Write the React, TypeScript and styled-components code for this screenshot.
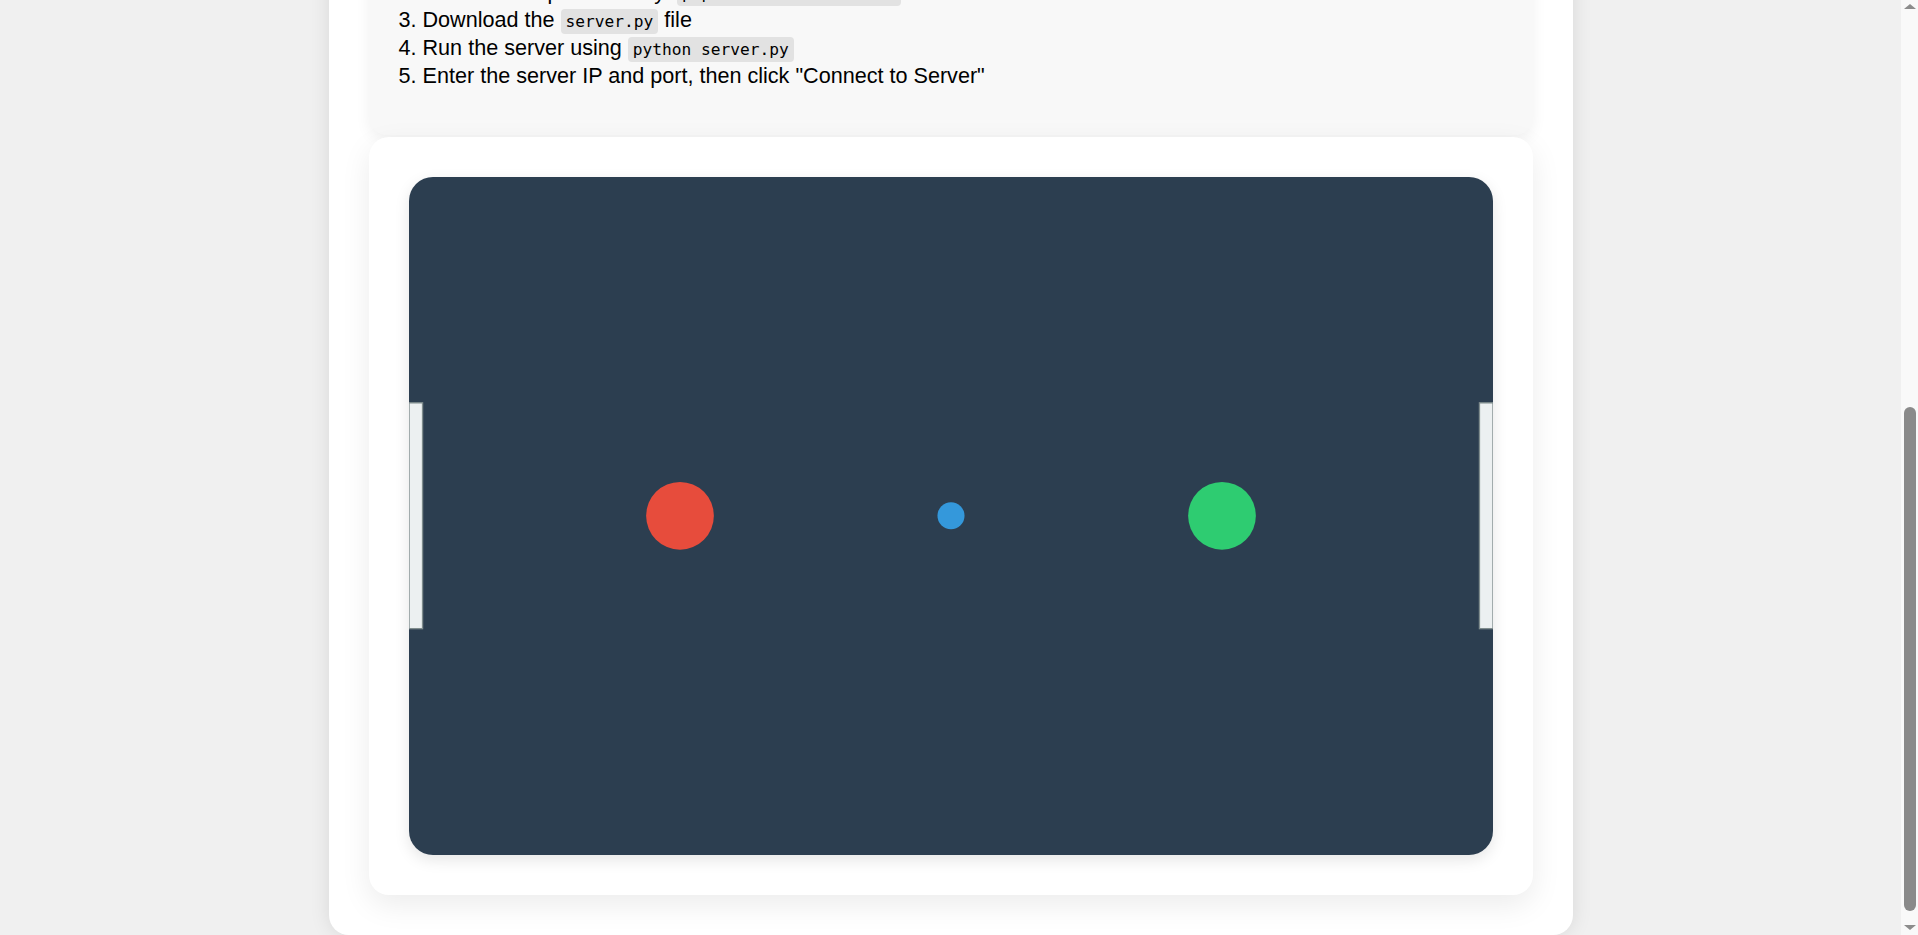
import React, { useLayoutEffect, useEffect } from "react";
import styled, { createGlobalStyle } from "styled-components";

const GlobalStyle = createGlobalStyle`
  html, body {
    margin: 0;
    padding: 0;
    background: #f0f0f0;
    font-family: "Liberation Sans", Arial, sans-serif;
    color: #000;
    scroll-behavior: auto;
  }
  * { box-sizing: border-box; }
`;

const Page = styled.div`
  padding-top: 20px;
  padding-right: 17px;
`;

const Container = styled.main`
  width: 1244px;
  margin: 0 auto;
  padding: 40px;
  background: #ffffff;
  border-radius: 20px;
  box-shadow: 0 0 20px rgba(0, 0, 0, 0.1);
  display: flex;
  flex-direction: column;
`;

const Title = styled.h1`
  margin: 0 0 24px;
  text-align: center;
  font-size: 44px;
  color: #2c3e50;
`;

const ScoreRow = styled.div`
  display: flex;
  justify-content: center;
  gap: 80px;
  margin-bottom: 24px;
`;

const Score = styled.div<{ $color: string }>`
  font-size: 28px;
  font-weight: bold;
  color: ${(p) => p.$color};
`;

const Section = styled.section<{ $gap?: number }>`
  background: #f8f8f8;
  border-radius: 18px;
  box-shadow: 0 5px 15px rgba(0, 0, 0, 0.06);
  padding: 24px 30px;
  margin-bottom: ${(p) => (p.$gap ?? 24)}px;
`;

const ControlRow = styled.div`
  display: flex;
  align-items: center;
  gap: 16px;
  font-size: 21.6px;
`;

const Input = styled.input`
  font: inherit;
  font-size: 20px;
  padding: 8px 12px;
  border: 1px solid #ccc;
  border-radius: 8px;
  width: 220px;
`;

const Button = styled.button`
  font: inherit;
  font-size: 20px;
  padding: 10px 20px;
  border: none;
  border-radius: 8px;
  background: #3498db;
  color: #fff;
`;

const Status = styled.div`
  margin-top: 14px;
  font-size: 20px;
  color: #e74c3c;
`;

const InstructionTitle = styled.h3`
  margin: 0 0 10px;
  font-size: 24px;
  color: #2c3e50;
`;

const StepList = styled.div`
  font-size: 21.6px;
  line-height: 26px;
  padding-bottom: 22px;
`;

const Step = styled.div`
  white-space: nowrap;
`;

const Code = styled.code`
  font-family: "DejaVu Sans Mono", "Liberation Mono", monospace;
  font-size: 16.2px;
  background: #e2e2e2;
  padding: 3px 5px;
  border-radius: 4px;
`;

const GameCard = styled.section`
  background: #ffffff;
  border-radius: 20px;
  padding: 40px;
  box-shadow: 0 10px 30px rgba(0, 0, 0, 0.08);
`;

const Board = styled.div`
  width: 100%;
  aspect-ratio: 800 / 500;
  background: #2c3e50;
  border-radius: 24px;
  overflow: hidden;
  box-shadow: 0 5px 15px rgba(0, 0, 0, 0.1);
`;

const BoardSvg = styled.svg`
  display: block;
  width: 100%;
  height: 100%;
`;

const Scrollbar = styled.div`
  position: fixed;
  top: 0;
  right: 0;
  width: 17px;
  height: 100vh;
  background: #f9f9f9;
  display: flex;
  flex-direction: column;
  align-items: center;
`;

const Arrow = styled.div<{ $dir: "up" | "down" }>`
  width: 0;
  height: 0;
  border-left: 6px solid transparent;
  border-right: 6px solid transparent;
  ${(p) =>
    p.$dir === "up"
      ? "border-bottom: 5px solid #8c8c8c; margin-top: 4px;"
      : "border-top: 5px solid #8c8c8c; margin-bottom: 5px;"}
`;

const Thumb = styled.div`
  width: 12px;
  height: 504px;
  margin-top: auto;
  margin-bottom: 14px;
  border-radius: 6px;
  background: #8a8a8a;
`;

type StepData = { n: number; text: string; code?: string; after?: string };

const steps: StepData[] = [
  { n: 1, text: "Install Python 3.7 or higher" },
  { n: 2, text: "Install the required library: ", code: "pip install websockets" },
  { n: 3, text: "Download the ", code: "server.py", after: " file" },
  { n: 4, text: "Run the server using ", code: "python server.py" },
  { n: 5, text: 'Enter the server IP and port, then click "Connect to Server"' },
];

const GOAL_H = 500 / 3;

export default function App() {
  useLayoutEffect(() => {
    window.scrollTo(0, document.documentElement.scrollHeight);
  }, []);
  useEffect(() => {
    const t = setTimeout(() => window.scrollTo(0, document.documentElement.scrollHeight), 50);
    return () => clearTimeout(t);
  }, []);

  return (
    <>
      <GlobalStyle />
      <Page>
        <Container>
          <Title>Air Hockey Online</Title>
          <ScoreRow>
            <Score $color="#e74c3c">Player 1: 0</Score>
            <Score $color="#2ecc71">Player 2: 0</Score>
          </ScoreRow>
          <Section>
            <ControlRow>
              <label>Server IP:</label>
              <Input defaultValue="localhost" />
              <label>Port:</label>
              <Input defaultValue="8765" />
              <Button>Connect to Server</Button>
            </ControlRow>
            <Status>Status: Disconnected</Status>
          </Section>
          <Section $gap={2}>
            <InstructionTitle>How to play online:</InstructionTitle>
            <StepList>
              {steps.map((s) => (
                <Step key={s.n}>
                  {s.n}. {s.text}
                  {s.code && <Code>{s.code}</Code>}
                  {s.after}
                </Step>
              ))}
            </StepList>
          </Section>
          <GameCard>
            <Board>
              <BoardSvg viewBox="0 0 800 500" preserveAspectRatio="none">
                <rect x={0} y={GOAL_H} width={10} height={GOAL_H} fill="#ecf0f1" stroke="#7f8c8d" strokeWidth={1} />
                <rect x={790} y={GOAL_H} width={10} height={GOAL_H} fill="#ecf0f1" stroke="#7f8c8d" strokeWidth={1} />
                <circle cx={200} cy={250} r={25} fill="#e74c3c" />
                <circle cx={600} cy={250} r={25} fill="#2ecc71" />
                <circle cx={400} cy={250} r={10} fill="#3498db" />
              </BoardSvg>
            </Board>
          </GameCard>
        </Container>
      </Page>
      <Scrollbar aria-hidden="true">
        <Arrow $dir="up" />
        <Thumb />
        <Arrow $dir="down" />
      </Scrollbar>
    </>
  );
}
